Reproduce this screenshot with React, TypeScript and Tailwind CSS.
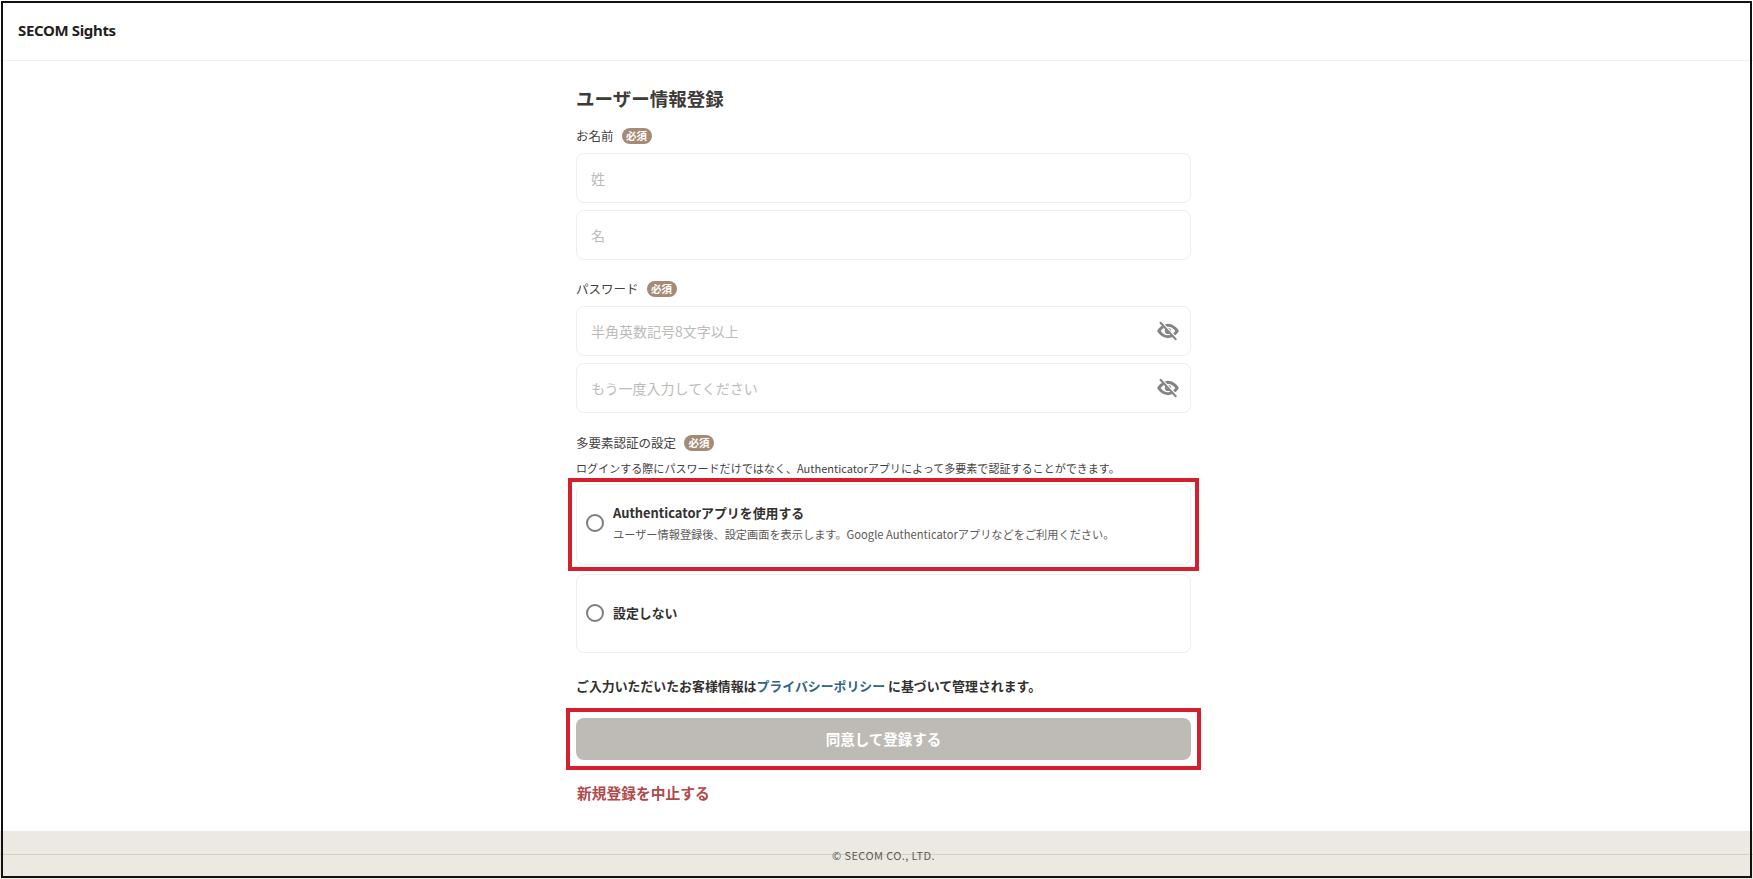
import React from 'react';

const Required = () => (
  <span className="inline-flex h-[16px] w-[30px] items-center justify-center rounded-full bg-[#a58b76] text-[10.5px] font-bold leading-none text-white">
    必須
  </span>
);

const FieldLabel = ({ children }: { children: React.ReactNode }) => (
  <div className="flex h-[20px] items-center gap-[8px] text-[12.5px] leading-none text-[#444140]">
    <span>{children}</span>
    <Required />
  </div>
);

const EyeOff = () => (
  <svg viewBox="0 0 24 24" fill="none" className="h-[22px] w-[22px] text-[#858483]">
    <path d="M2 12s3.8-6.2 10-6.2S22 12 22 12s-3.8 6.2-10 6.2S2 12 2 12z" stroke="currentColor" strokeWidth="3.4" strokeLinejoin="round" />
    <circle cx="12" cy="12" r="3.4" fill="currentColor" />
    <path d="M5.2 3.6 20.6 20" stroke="white" strokeWidth="3.2" />
    <path d="M3.8 3 20.4 21" stroke="currentColor" strokeWidth="2.2" strokeLinecap="round" />
  </svg>
);

const Field = ({ placeholder, eye }: { placeholder: string; eye?: boolean }) => (
  <div className="flex h-[50px] items-center justify-between rounded-[8px] border border-[#efeeec] bg-white pl-[14px] pr-[11px]">
    <span className="text-[14px] text-[#bdbbb9]">{placeholder}</span>
    {eye && <EyeOff />}
  </div>
);

const Radio = () => <span className="h-[18px] w-[18px] shrink-0 rounded-full border-2 border-[#7f7d7b] bg-white" />;

export default function App() {
  return (
    <div className="relative flex h-[879px] w-[1753px] flex-col bg-white font-['Noto_Sans_CJK_JP','Noto_Sans',sans-serif]">
      {/* Page frame */}
      <div className="pointer-events-none absolute bottom-[1px] left-[1px] right-[1px] top-[1px] z-20 border-2 border-[#111111]" />

      <header className="flex h-[61px] shrink-0 items-center border-b border-[#f0efee] pl-[18px]">
        <span className="font-['Noto_Sans',sans-serif] text-[15px] font-bold tracking-[-0.35px] text-[#231f1e]">SECOM Sights</span>
      </header>

      <main className="relative ml-[576px] flex w-[615px] flex-1 flex-col">
        <h1 className="mt-[22px] text-[18.5px] font-bold leading-[30px] text-[#3d3a39]">ユーザー情報登録</h1>

        <div className="mt-[13px]">
          <FieldLabel>お名前</FieldLabel>
        </div>
        <div className="mt-[7px] flex flex-col gap-[7px]">
          <Field placeholder="姓" />
          <Field placeholder="名" />
        </div>

        <div className="mt-[19px]">
          <FieldLabel>パスワード</FieldLabel>
        </div>
        <div className="mt-[7px] flex flex-col gap-[7px]">
          <Field placeholder="半角英数記号8文字以上" eye />
          <Field placeholder="もう一度入力してください" eye />
        </div>

        <div className="mt-[20px]">
          <FieldLabel>多要素認証の設定</FieldLabel>
        </div>
        <p className="mt-[6px] text-[11.05px] leading-[18px] text-[#444140]">
          ログインする際にパスワードだけではなく、Authenticatorアプリによって多要素で認証することができます。
        </p>

        <div className="mt-[7px] flex flex-col gap-[9px]">
          <div className="flex h-[81px] items-center gap-[9px] rounded-[8px] border border-[#efeeec] pb-[3px] pl-[9px]">
            <Radio />
            <div>
              <div className="text-[12.9px] font-bold leading-[18px] text-[#333030]">Authenticatorアプリを使用する</div>
              <div className="mt-[5px] text-[11.2px] leading-[15px] text-[#5c5958]">
                ユーザー情報登録後、設定画面を表示します。Google Authenticatorアプリなどをご利用ください。
              </div>
            </div>
          </div>
          <div className="flex h-[79px] items-center gap-[9px] rounded-[8px] border border-[#efeeec] pb-[1px] pl-[9px]">
            <Radio />
            <div className="text-[12.9px] font-bold text-[#333030]">設定しない</div>
          </div>
        </div>

        <p className="mt-[23px] text-[12.9px] font-bold leading-[20px] text-[#333030]">
          ご入力いただいたお客様情報は<span className="text-[#2f6486]">プライバシーポリシー</span> に基づいて管理されます。
        </p>

        <button className="mt-[22px] flex h-[42px] items-center justify-center rounded-[8px] bg-[#bebbb7] text-[14.5px] font-bold text-white">
          同意して登録する
        </button>

        <a href="#" className="mt-[22px] pl-[1px] text-[14.75px] font-bold leading-[22px] text-[#b04a4c]">
          新規登録を中止する
        </a>

        {/* Annotation boxes */}
        <div className="absolute left-[-8px] right-[-8px] top-[417px] h-[93px] border-4 border-[#d4202c]" />
        <div className="absolute left-[-10px] right-[-10px] top-[647px] h-[62px] border-4 border-[#d4202c]" />
      </main>

      <footer className="relative flex h-[48px] shrink-0 items-center justify-center bg-[#ece9e2] pl-[14px]">
        <div className="absolute left-0 right-0 top-[23px] h-px bg-[#d3d0c9]" />
        <span className="relative text-[11px] tracking-[0.4px] text-[#5c5958]">© SECOM CO., LTD.</span>
      </footer>
    </div>
  );
}
